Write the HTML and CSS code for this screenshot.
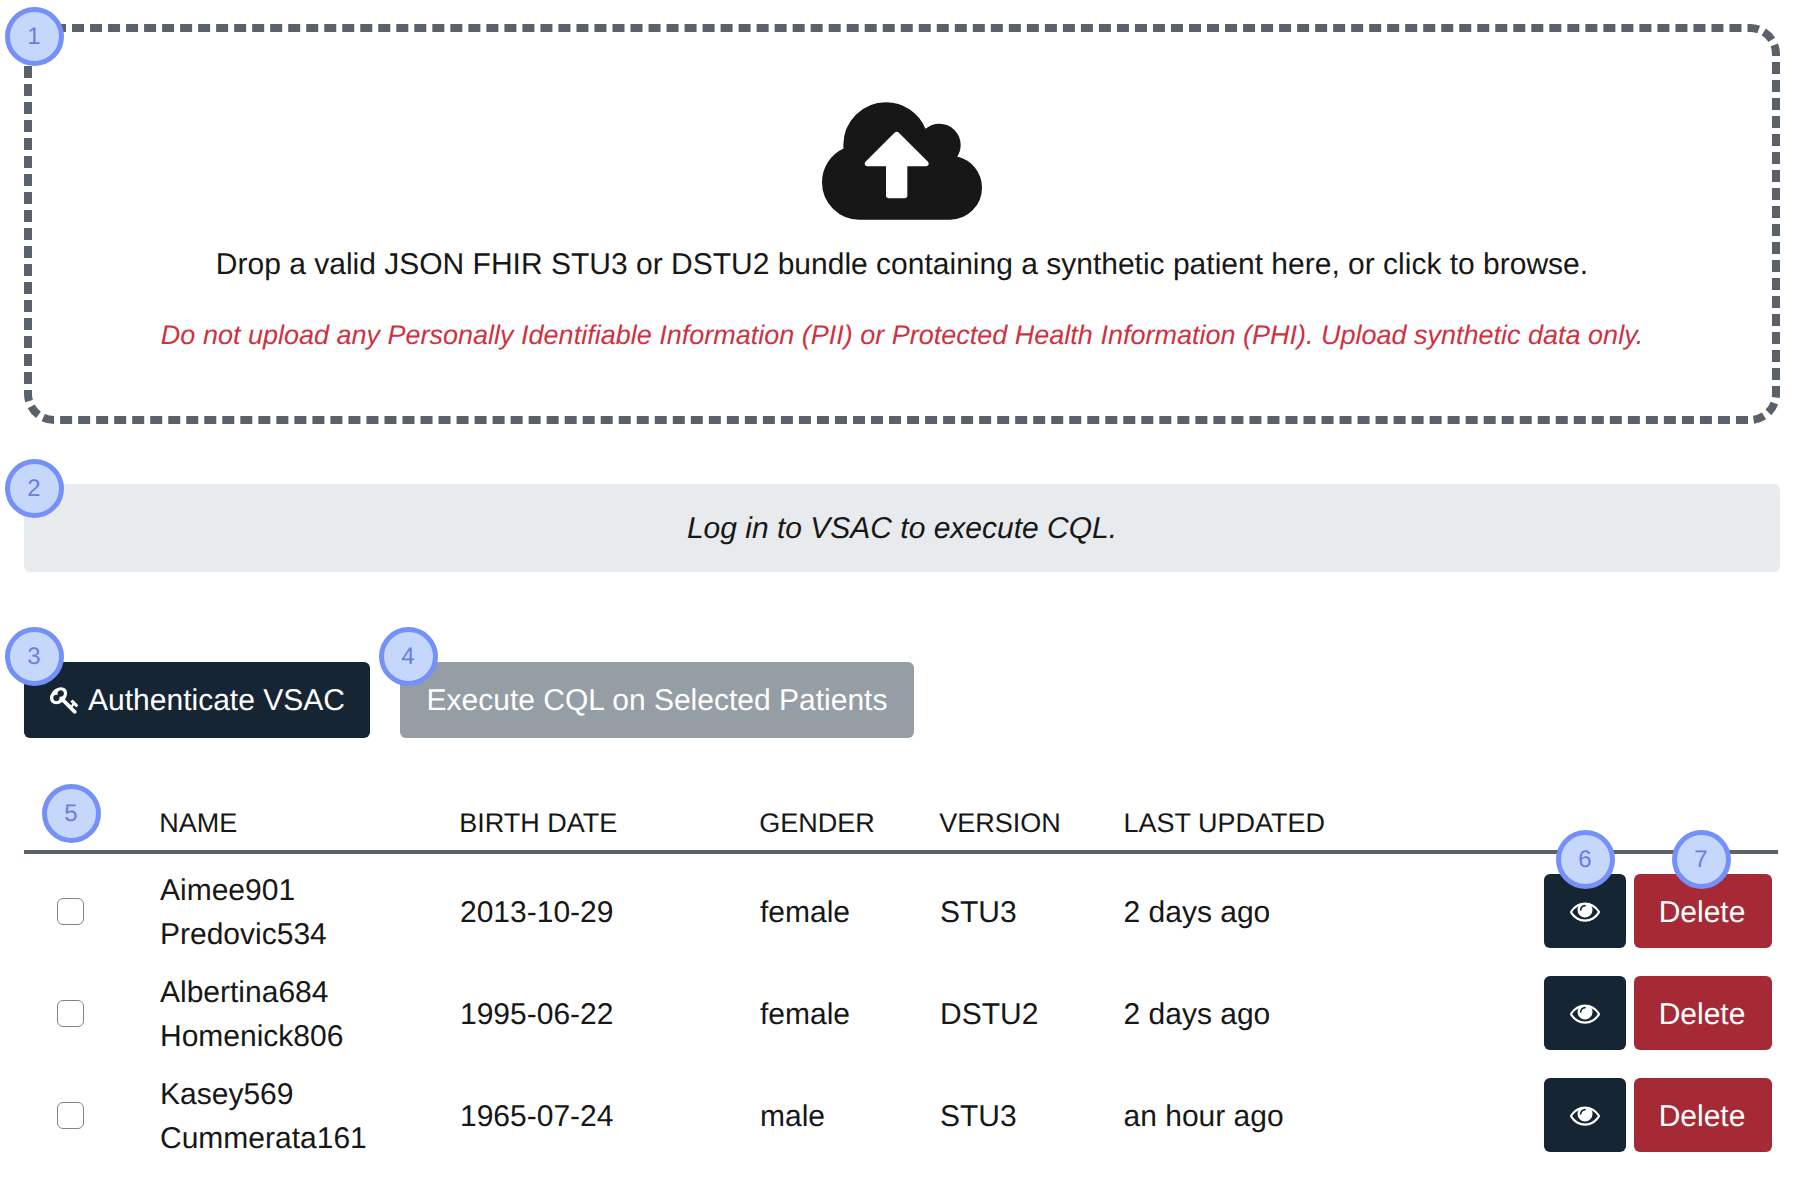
FILE: index.html
```html
<!DOCTYPE html>
<html lang="en">
<head>
<meta charset="utf-8">
<title>Patients</title>
<link rel="stylesheet" href="styles.css">
</head>
<body>
<svg class="sprite" aria-hidden="true">
  <symbol id="eye" viewBox="0 0 1792 1792"><path d="M1664 960q-152-236-381-353 61 104 61 225 0 185-131.5 316.5t-316.5 131.5-316.5-131.5-131.5-316.5q0-121 61-225-229 117-381 353 133 205 333.5 326.5t434.5 121.5 434.5-121.5 333.5-326.5zm-720-384q0-20-14-34t-34-14q-125 0-214.5 89.5t-89.5 214.5q0 20 14 34t34 14 34-14 14-34q0-86 61-147t147-61q20 0 34-14t14-34zm848 384q0 34-20 69-140 230-376.5 368.5t-499.5 138.5-499.5-139-376.5-368q-20-35-20-69t20-69q140-229 376.5-368t499.5-139 499.5 139 376.5 368q20 35 20 69z"/></symbol>
</svg>
<main class="page">
  <section class="dropzone">
    <svg class="outline" viewBox="0 0 1756 400" aria-hidden="true">
      <path d="M30 4H1726" stroke-dasharray="12 6.016"/>
      <path d="M1726 4A26 26 0 0 1 1752 30" pathLength="43.5" stroke-dasharray="12 6" stroke-dashoffset="2.5"/>
      <path d="M1752 30V370" stroke-dasharray="12 6" stroke-dashoffset="10"/>
      <path d="M1752 370A26 26 0 0 1 1726 396" pathLength="44" stroke-dasharray="12 6" stroke-dashoffset="8"/>
      <path d="M1726 396H30" stroke-dasharray="12 6.02" stroke-dashoffset="16"/>
      <path d="M30 396A26 26 0 0 1 4 370" pathLength="44" stroke-dasharray="12 6"/>
      <path d="M4 370V30" stroke-dasharray="12 6" stroke-dashoffset="8"/>
      <path d="M4 30A26 26 0 0 1 30 4" pathLength="48" stroke-dasharray="12 6" stroke-dashoffset="6"/>
    </svg>
    <span class="badge badge-edge">1</span>
    <svg class="cloud" viewBox="0 64 1920 1408"><path d="M1280 800q0-14-9-23l-352-352q-9-9-23-9t-23 9l-351 351q-10 12-10 24 0 14 9 23t23 9h224v352q0 13 9.5 22.5t22.5 9.5h192q13 0 22.5-9.5t9.5-22.5v-352h224q13 0 22.5-9.5t9.5-22.5zm640 288q0 159-112.5 271.5t-271.5 112.5h-1088q-185 0-316.5-131.5t-131.5-316.5q0-130 70-240t188-165q-2-30-2-43 0-212 150-362t362-150q156 0 285.5 87t188.5 231q71-62 166-62 106 0 181 75t75 181q0 76-41 138 130 31 213.5 135.5t83.5 238.5z"/></svg>
    <p class="drop-text">Drop a valid JSON FHIR STU3 or DSTU2 bundle containing a synthetic patient here, or click to browse.</p>
    <p class="warning">Do not upload any Personally Identifiable Information (PII) or Protected Health Information (PHI). Upload synthetic data only.</p>
  </section>
  <section class="notice"><span class="badge badge-notice">2</span>Log in to VSAC to execute CQL.</section>
  <div class="actions">
    <button class="btn btn-auth"><span class="badge badge-action">3</span><svg class="icon" viewBox="0 0 1792 1792"><path d="M832 512q0-80-56-136t-136-56-136 56-56 136q0 42 19 83-41-19-83-19-80 0-136 56t-56 136 56 136 136 56 136-56 56-136q0-42-19-83 41 19 83 19 80 0 136-56t56-136zm851 704q0 17-49 66t-66 49q-9 0-28.5-16t-36.5-33-38.5-40-24.5-26l-96 96 220 220q28 28 28 68 0 42-39 81t-81 39q-40 0-68-28l-671-671q-176 131-365 131-163 0-265.5-102.5t-102.5-265.5q0-160 95-313t248-248 313-95q163 0 265.5 102.5t102.5 265.5q0 189-131 365l355 355 96-96q-3-3-26-24.5t-40-38.5-33-36.5-16-28.5q0-17 49-66t66-49q13 0 23 10 6 6 46 44.5t82 79.5 86.5 86 73 78 28.5 41z"/></svg><span class="label">Authenticate VSAC</span></button>
    <button class="btn btn-run"><span class="badge badge-run">4</span><span class="label">Execute CQL on Selected Patients</span></button>
  </div>
  <section class="table">
    <div class="row head">
      <span class="check-cell"><span class="badge badge-check">5</span></span>
      <span class="title">NAME</span><span class="title">BIRTH DATE</span><span class="title">GENDER</span><span class="title">VERSION</span><span>LAST UPDATED</span><span></span>
    </div>
    <div class="row">
      <span class="check-cell"><input type="checkbox" class="check"></span>
      <span class="cell">Aimee901<br>Predovic534</span><span class="cell">2013-10-29</span><span class="cell">female</span><span class="cell">STU3</span><span class="cell">2 days ago</span>
      <span class="tools"><button class="btn btn-view"><span class="badge badge-tool">6</span><svg class="icon"><use href="#eye"/></svg></button><button class="btn btn-delete"><span class="badge badge-delete">7</span><span class="label">Delete</span></button></span>
    </div>
    <div class="row">
      <span class="check-cell"><input type="checkbox" class="check"></span>
      <span class="cell">Albertina684<br>Homenick806</span><span class="cell">1995-06-22</span><span class="cell">female</span><span class="cell">DSTU2</span><span class="cell">2 days ago</span>
      <span class="tools"><button class="btn btn-view"><svg class="icon"><use href="#eye"/></svg></button><button class="btn btn-delete"><span class="label">Delete</span></button></span>
    </div>
    <div class="row">
      <span class="check-cell"><input type="checkbox" class="check"></span>
      <span class="cell">Kasey569<br>Cummerata161</span><span class="cell">1965-07-24</span><span class="cell">male</span><span class="cell">STU3</span><span class="cell">an hour ago</span>
      <span class="tools"><button class="btn btn-view"><svg class="icon"><use href="#eye"/></svg></button><button class="btn btn-delete"><span class="label">Delete</span></button></span>
    </div>
  </section>
</main>
</body>
</html>
```
FILE: styles.css
```css
* { box-sizing: border-box; }
body {
  margin: 0;
  background: #fff;
  color: #171717;
  font: 30px/44px "Liberation Sans", Arial, sans-serif;
  text-rendering: geometricPrecision;
  overflow: hidden;
}
.sprite { display: none; }
.page { padding: 24px; }
p { margin: 0; white-space: nowrap; }

.dropzone {
  position: relative;
  height: 400px;
  display: flex;
  flex-direction: column;
  align-items: center;
  padding-top: 78px;
}
.outline {
  position: absolute;
  inset: 0;
  width: 1756px;
  height: 400px;
  fill: none;
  stroke: #5b616b;
  stroke-width: 8;
}
.cloud { width: 160px; height: 118px; fill: #171717; flex: none; }
.drop-text { margin-top: 23px; }
.warning { margin-top: 26px; color: #d0313f; font-size: 27px; font-style: italic; }

.notice {
  position: relative;
  height: 88px;
  margin-top: 60px;
  padding-top: 2px;
  border-radius: 6px;
  background: #e7ebee;
  display: flex;
  align-items: center;
  justify-content: center;
  font-style: italic;
}

.actions { display: flex; gap: 30px; margin-top: 90px; }
.btn {
  position: relative;
  display: flex;
  align-items: center;
  justify-content: center;
  border: 0;
  border-radius: 6px;
  padding: 0;
  font: inherit;
  text-rendering: inherit;
  color: #fff;
  white-space: nowrap;
}
.label { padding-top: 2px; }
.icon { width: 30px; height: 30px; fill: #fff; flex: none; }
.btn-auth { width: 346px; height: 76px; background: #152534; gap: 8px; padding-left: 1px; }
.btn-run { width: 514px; height: 76px; background: #959da5; }

.table { width: 1754px; margin-top: 60px; }
.row {
  display: grid;
  grid-template-columns: 136px 300px 300px 180px 183.5px 1fr 234px;
  align-items: center;
  height: 102px;
}
.cell { padding-top: 4px; }
.title { margin-left: -0.7px; }
.head {
  height: 56px;
  border-bottom: 4px solid #5b616b;
  margin-bottom: 6px;
  padding-bottom: 2px;
  font-size: 27px;
}
.check-cell { position: relative; display: flex; padding-left: 33px; align-self: stretch; align-items: center; }
.check {
  appearance: none;
  width: 27px;
  height: 27px;
  margin: 0;
  border: 1px solid #858585;
  border-radius: 6px;
  background: #fff;
}
.tools { display: flex; gap: 8px; }
.btn-view { width: 82px; height: 74px; background: #152534; }
.btn-delete { width: 138px; height: 74px; background: #a62a36; padding-right: 2px; }
.btn-delete .label { padding-top: 4px; }

.badge {
  position: absolute;
  width: 59px;
  height: 59px;
  border: 5px solid #7590f8;
  border-radius: 50%;
  background: #c5d8fc;
  color: #6b7de0;
  font: normal 24px/50px "Liberation Sans", Arial, sans-serif;
  text-align: center;
  padding-right: 1px;
  z-index: 1;
}
.badge-edge { left: -19px; top: -17px; }
.badge-notice { left: -19px; top: -25px; }
.badge-action { left: -19px; top: -35px; }
.badge-run { left: -21px; top: -35px; }
.badge-check { left: 18px; top: -14px; }
.badge-tool { left: 12px; top: -44px; }
.badge-delete { left: 38px; top: -44px; }
```
